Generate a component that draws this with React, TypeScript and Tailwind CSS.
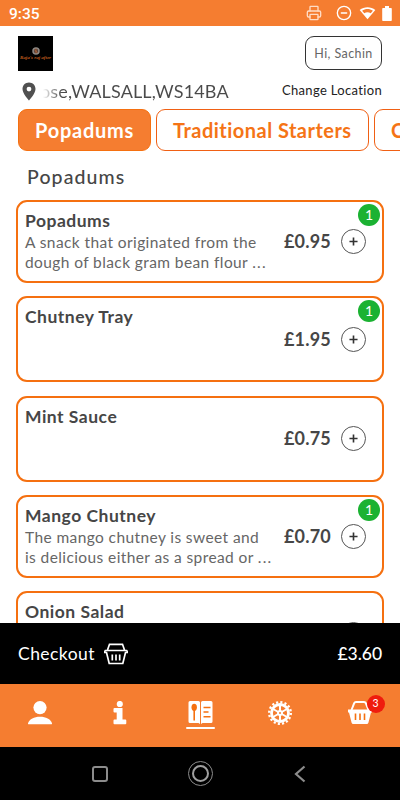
import { Printer, CircleMinus } from "lucide-react";

type Item = {
    name: string;
    lines: string[];
    price?: string;
    count?: number;
};

const items: Item[] = [
    { name: "Popadums", lines: ["A snack that originated from the", "dough of black gram bean flour …"], price: "£0.95", count: 1 },
    { name: "Chutney Tray", lines: [], price: "£1.95", count: 1 },
    { name: "Mint Sauce", lines: [], price: "£0.75" },
    { name: "Mango Chutney", lines: ["The mango chutney is sweet and", "is delicious either as a spread or …"], price: "£0.70", count: 1 },
    { name: "Onion Salad", lines: [] },
];

function StatusBar() {
    return (
        <div className="flex h-[26px] shrink-0 items-center bg-[#f57d30] pl-[9px] pr-[8px] text-white">
            <span className="pt-[3px] font-['Roboto',sans-serif] text-[15.5px] font-medium leading-none">9:35</span>
            <Printer className="ml-auto h-4 w-4 text-[#ffdcc5]" strokeWidth={2} />
            <CircleMinus className="ml-[14px] h-4 w-4" strokeWidth={2} />
            <svg viewBox="0 0 18 14" className="ml-[7px] h-[14px] w-[17px]">
                <path d="M9 13.5 0.7 3.8C5.5-.2 12.5-.2 17.3 3.8Z" fill="white" />
                <path d="M3.3 4.7C6.8 2.2 11.2 2.2 14.7 4.7L12.4 7.3C10.3 6 7.7 6 5.6 7.3Z" fill="#f57d30" />
            </svg>
            <svg viewBox="0 0 10 15" className="ml-[6px] h-[15px] w-[10px]">
                <path d="M3 0h4v2h2a.8.8 0 0 1 .8.8v11.4a.8.8 0 0 1-.8.8H1a.8.8 0 0 1-.8-.8V2.8A.8.8 0 0 1 1 2h2Z" fill="white" />
            </svg>
        </div>
    );
}

function Logo() {
    return (
        <div className="flex h-[35px] w-[35px] flex-col items-center bg-black pt-[11px]">
            <svg viewBox="0 0 10 8" className="h-[8px] w-[10px]">
                <circle cx="5" cy="4" r="3" fill="#57423a" stroke="#8c8884" strokeWidth="1.5" />
                <path d="M5 1.5v5M3.5 3l3 2.5" stroke="#b5673a" strokeWidth=".8" />
            </svg>
            <span className="whitespace-nowrap font-['Liberation_Serif',serif] text-[5px] font-bold italic leading-[5px] text-[#bd5a1d]">Raja's raj after</span>
        </div>
    );
}

function Header() {
    return (
        <div className="shrink-0 px-[18px] pt-[10px]">
            <div className="flex justify-between">
                <Logo />
                <button className="h-[34px] w-[77px] rounded-[9px] border border-[#333] pt-[2px] text-[12.5px] tracking-[0.4px] text-[#666]">Hi, Sachin</button>
            </div>
            <div className="flex h-[38px] items-center pt-[2px]">
                <svg viewBox="0 0 14 19" className="ml-[4px] h-[19px] w-[14px]">
                    <path d="M7 .5C3.3.5.5 3.3.5 7c0 4.7 6.5 11.5 6.5 11.5S13.5 11.7 13.5 7C13.5 3.3 10.7.5 7 .5Zm0 4.2a2.4 2.4 0 1 1 0 4.8 2.4 2.4 0 0 1 0-4.8Z" fill="#505050" />
                </svg>
                <div className="ml-[7px] w-[190px] whitespace-nowrap bg-gradient-to-r from-white from-[0%] via-[#4a4a4a] via-[10%] to-[#4a4a4a] bg-clip-text text-[18px] leading-[24px] tracking-[0.15px] text-transparent">
                    <span className="-ml-[3px]">ose,WALSALL,WS14BA</span>
                </div>
                <span className="ml-auto whitespace-nowrap text-[13px] tracking-[0.33px] text-[#222]">Change Location</span>
            </div>
        </div>
    );
}

function Tabs() {
    return (
        <div className="flex h-[42px] shrink-0 gap-[5px] overflow-hidden pl-[18px] text-[20px] font-bold">
            <div className="flex w-[133px] shrink-0 items-center rounded-[9px] border border-[#f57010] bg-[#f57d30] pl-[16px] tracking-[0.75px] text-white">Popadums</div>
            <div className="flex w-[213px] shrink-0 items-center whitespace-nowrap rounded-[9px] border border-[#f06014] pl-[16px] tracking-[0.48px] text-[#f57416]">Traditional Starters</div>
            <div className="flex w-[133px] shrink-0 items-center rounded-[9px] border border-[#f06014] pl-[16px] text-[#f57416]">C</div>
        </div>
    );
}

function Card({ item }: { item: Item }) {
    return (
        <div className={`relative flex shrink-0 rounded-[11px] border-2 border-[#f57010] pl-[7px] pr-[16px] ${item.lines.length ? "h-[82.7px]" : "h-[86px]"}`}>
            <div className="w-[255px] whitespace-nowrap pt-[8px] text-[#464646]">
                <h3 className="text-[17.5px] font-bold leading-[21px] tracking-[0.5px]">{item.name}</h3>
                <p className="pt-px text-[15.5px] leading-[20px] tracking-[0.4px] text-[#666]">
                    {item.lines.map((line) => (
                        <span key={line} className="block">
                            {line.replace("…", "")}
                            {line.endsWith("…") && <span className="tracking-[1.2px]">...</span>}
                        </span>
                    ))}
                </p>
            </div>
            <div className="ml-auto flex items-center">
                <span className="text-[18px] font-bold tracking-[0.2px] text-[#464646]">{item.price}</span>
                <button className="ml-[10px] flex h-[25px] w-[25px] items-center justify-center rounded-full border border-[#555]">
                    <svg viewBox="0 0 10 10" className="h-[9px] w-[9px]">
                        <path d="M5 .5v9M.5 5h9" stroke="#333" strokeWidth="1.8" />
                    </svg>
                </button>
            </div>
            {item.count && (
                <span className="absolute right-[2px] top-[2px] flex h-[22px] w-[22px] items-center justify-center rounded-full bg-[#1bb232] text-[14px] leading-none text-white">{item.count}</span>
            )}
        </div>
    );
}

function NavBar() {
    return (
        <div className="grid h-[63px] shrink-0 grid-cols-5 bg-[#f57d30]">
            <div className="flex justify-center pt-[17px]">
                <svg viewBox="0 0 24 24" className="h-6 w-6" fill="white">
                    <circle cx="12" cy="6.6" r="6.6" />
                    <path d="M0 22.3C1.5 18 6 15.8 12 15.8S22.5 18 24 22.3c.1.5-.2.9-.7.9H.7c-.5 0-.8-.4-.7-.9Z" />
                </svg>
            </div>
            <div className="flex justify-center pt-[17px]">
                <svg viewBox="0 0 14 24" className="h-6 w-[14px]" fill="white">
                    <circle cx="6.8" cy="3" r="3.1" />
                    <path d="M1.5 7h8v11.5h2.8a1 1 0 0 1 1 1v2.8a1 1 0 0 1-1 1H1.5a1 1 0 0 1-1-1v-2.8a1 1 0 0 1 1-1h2.2v-7H1.5a1 1 0 0 1-1-1V8a1 1 0 0 1 1-1Z" />
                </svg>
            </div>
            <div className="flex flex-col items-center pt-[17px]">
                <svg viewBox="0 0 25 24" className="h-6 w-[25px]">
                    <path d="M2 0h8.5Q12 0 12 1.5V23L10.5 22H2Q.5 22 .5 20.5v-19Q.5 0 2 0Z" fill="white" />
                    <path d="M14.5 0H23q1.5 0 1.5 1.5v19Q24.5 22 23 22h-8.5L13 23V1.5Q13 0 14.5 0Z" fill="white" />
                    <ellipse cx="6.2" cy="6.3" rx="2.7" ry="3.6" fill="#f57010" />
                    <path d="M6.2 8v11.5" stroke="#f57010" strokeWidth="1.6" />
                    <path d="M15.5 6.5h7M15.5 11h5M15.5 15.8h7" stroke="#f57010" strokeWidth="1.5" />
                </svg>
                <span className="mt-[2px] h-[2px] w-[29px] rounded bg-white" />
            </div>
            <div className="flex justify-center pt-[17px]">
                <svg viewBox="0 0 24 24" className="h-6 w-6" fill="none" stroke="white">
                    <circle cx="12" cy="12" r="8.5" strokeWidth="2.8" />
                    <circle cx="12" cy="12" r="10.8" strokeWidth="2.4" strokeDasharray="2.12 2.12" />
                    <path d="M12 3v18M4.2 7.5l15.6 9M19.8 7.5l-15.6 9" strokeWidth="2" />
                    <circle cx="12" cy="12" r="2" strokeWidth="2" />
                    <circle cx="12" cy="12" r="1" fill="#f57d30" stroke="none" />
                </svg>
            </div>
            <div className="relative flex justify-center pt-[17px]">
                <svg viewBox="0 0 24 24" className="h-6 w-6">
                    <path d="M3.5 9 6.2 2.2Q6.7 1 8 1h8q1.3 0 1.8 1.2L20.5 9" fill="none" stroke="white" strokeWidth="2" />
                    <path d="M0 8.5h24v3h-1l-2.6 10.3Q20 23 18.8 23H5.2Q4 23 3.6 21.8L1 11.5H0Z" fill="white" />
                    <path d="M7.5 12.5v6.5M12 12.5v6.5M16.5 12.5v6.5" stroke="#f57010" strokeWidth="1.6" />
                </svg>
                <span className="absolute left-[46.5px] top-[11px] flex h-[18px] w-[18px] items-center justify-center rounded-full bg-[#ef1c0e] text-[10.5px] text-white">3</span>
            </div>
        </div>
    );
}

export default function App() {
    return (
        <div className="flex h-[800px] w-[400px] flex-col overflow-hidden bg-white font-['Lato',sans-serif]">
            <StatusBar />
            <Header />
            <Tabs />
            <h2 className="h-[49px] shrink-0 pl-[27px] pt-[12px] text-[19.5px] font-medium leading-[28px] tracking-[1.1px] text-[#464646]">Popadums</h2>
            <div className="flex min-h-0 flex-1 flex-col gap-[13.5px] overflow-hidden px-4">
                {items.map((item) => (
                    <Card key={item.name} item={item} />
                ))}
            </div>
            <div className="flex h-[61px] shrink-0 items-center bg-black px-[18px] pt-px text-[17.5px] text-white">
                <span className="tracking-[0.45px]">Checkout</span>
                <svg viewBox="0 0 24 22" className="ml-[9px] h-[22px] w-6" fill="none" stroke="white" strokeWidth="1.7">
                    <path d="M3.5 7 5.5 1.3h13L20.5 7M.8 7.5h22.4M.8 7.5v2h1.7l2.7 11h13.6l2.7-11h1.7v-2" />
                    <path d="M8.3 11.5v6M12 11.5v6M15.7 11.5v6" />
                </svg>
                <span className="ml-auto font-medium tracking-[-0.05px]">£3.60</span>
            </div>
            <NavBar />
            <div className="flex h-[53px] shrink-0 items-center justify-between bg-black px-[92px]">
                <span className="h-4 w-4 rounded-[3px] border-2 border-[#8c8c8c]" />
                <span className="flex h-[25px] w-[25px] items-center justify-center rounded-full border border-[#8c8c8c]">
                    <span className="h-[17px] w-[17px] rounded-full border-2 border-[#a0a0a0]" />
                </span>
                <svg viewBox="0 0 16 18" className="h-[18px] w-4" fill="none" stroke="#8c8c8c" strokeWidth="2.2">
                    <path d="M12.5 1.5 4 9l8.5 7.5" />
                </svg>
            </div>
        </div>
    );
}
